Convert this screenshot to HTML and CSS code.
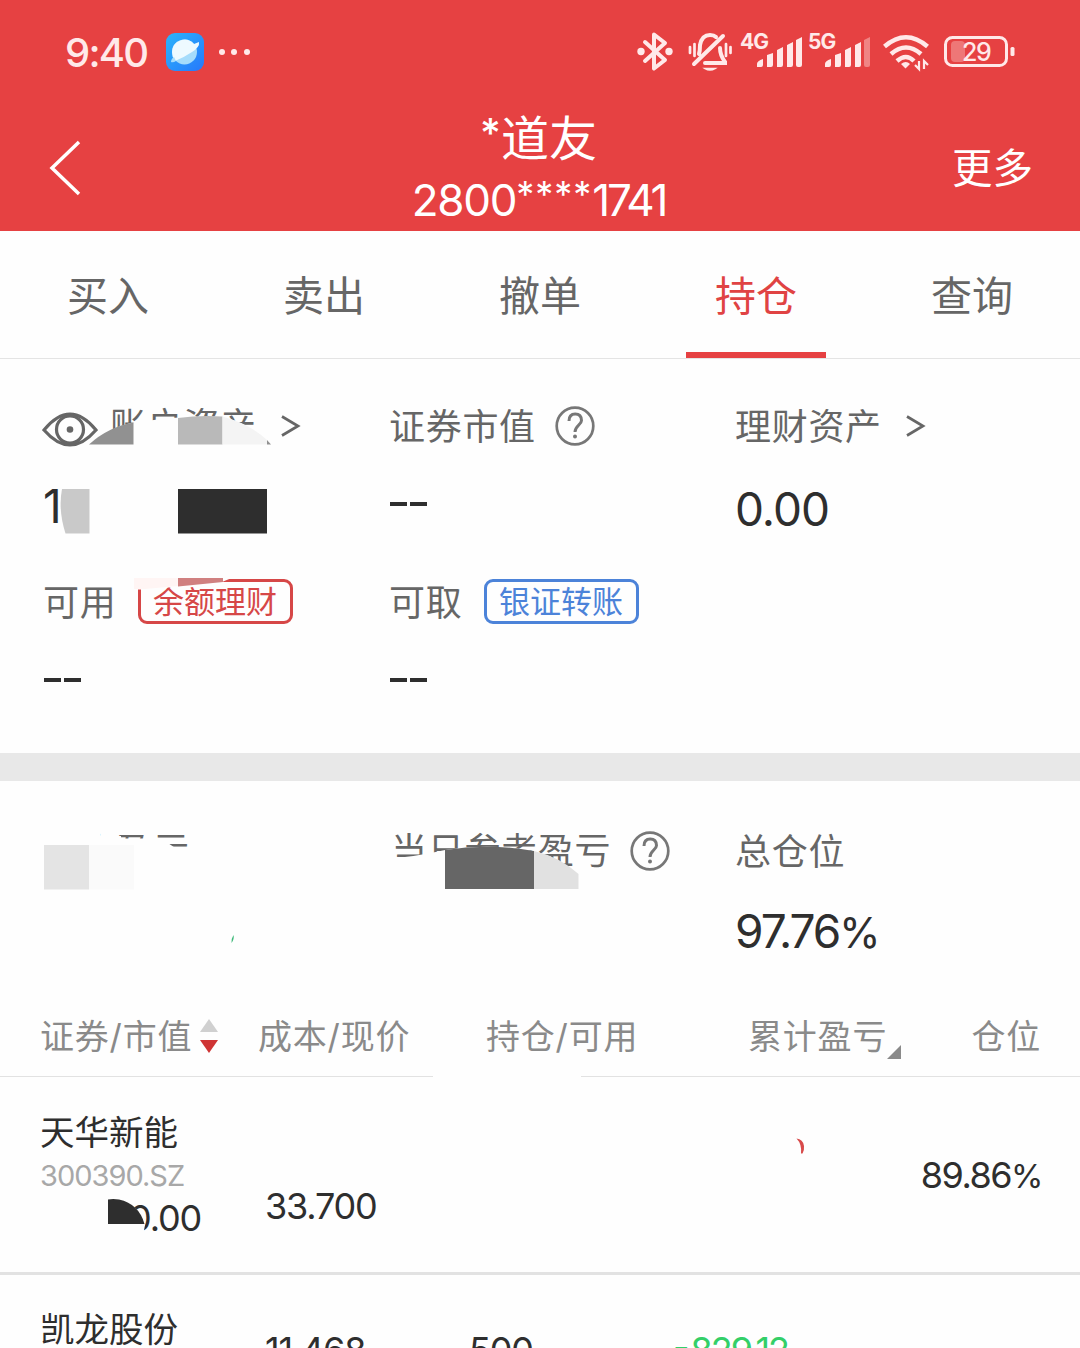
FILE: index.html
```html
<!DOCTYPE html>
<html lang="zh-CN">
<head>
  <meta charset="UTF-8">
  <title>持仓</title>
  <link rel="stylesheet" href="styles.css">
</head>
<body>
  <header class="top">
    <div class="status">
      <span class="time">9:40</span>
      <svg class="planet" width="38" height="38" viewBox="0 0 38 38">
        <defs>
          <linearGradient id="sky" x1="0" y1="0" x2="1" y2="1">
            <stop offset="0" stop-color="#2cb4fb"/>
            <stop offset="1" stop-color="#2678fb"/>
          </linearGradient>
        </defs>
        <rect width="38" height="38" rx="9" fill="url(#sky)"/>
        <circle cx="18.500" cy="19" r="12.500" fill="#a5dcfb"/>
        <path d="M6 19A12.500 12.500 0 0 1 28 11L33 9Q34 14 26 19 17 25 9 28 6 24 6 19z" fill="#eefaff"/>
        <path d="M5 29c0-2 1-4 3-5l2 4q-3 2-5 1z" fill="#a5dcfb"/>
      </svg>
      <svg class="dots" width="34" height="8" viewBox="0 0 34 8" fill="#ffe9e9">
        <circle cx="4" cy="4" r="3"/><circle cx="16" cy="4" r="3"/><circle cx="29" cy="4" r="3"/>
      </svg>
      <svg class="signals" width="380" height="44" viewBox="636 30 380 44" fill="none" stroke="#ffe9e9">
        <g stroke-width="4" stroke-linejoin="round" stroke-linecap="round">
          <path d="M645 42l20 18-11 8.500V34.500l11 8.500-20 18"/>
        </g>
        <g fill="#ffe9e9" stroke="none">
          <circle cx="641" cy="51.500" r="3.700"/><circle cx="669" cy="51.500" r="3.700"/>
        </g>
        <g stroke-width="4" stroke-linecap="round">
          <path d="M699 54q1-3 1-9 2-10 10-10 4 0 6 2M720 48q0 7 5 14v1h-20M694 64l29-28"/>
          <path d="M690 47v6M694.500 44v12M726 44v12M730.500 47v6" stroke-width="2.700"/>
          <path d="M705 68.500q5 3 10 0z" fill="#ffe9e9" stroke-width="1.500"/>
        </g>
        <g fill="#ffe9e9" stroke="none">
          <text class="net" x="740" y="49">4G</text>
          <text class="net" x="808" y="49">5G</text>
          <path d="M757 67v-3q0-3 6-5v6q0 2-2 2zM767 67V55l6-2v12q0 2-2 2zM777 67V50l6-3v18q0 2-2 2zM787 67V45l6-3v23q0 2-2 2zM796 65V40l6-3v28q0 2-2 2h-2q-2 0-2-2z"/>
          <path d="M825 67v-3q0-3 6-5v6q0 2-2 2zM835 67V55l6-2v12q0 2-2 2zM845 67V50l6-3v18q0 2-2 2zM855 67V45l6-3v23q0 2-2 2z"/>
          <path d="M864 65V40l6-3v28q0 2-2 2h-2q-2 0-2-2z" opacity=".4"/>
          <path d="M901 64q5-4 9 0l-4.500 4.500z"/>
        </g>
        <g stroke-width="4.500">
          <path d="M884.500 46.500q21.500-18.500 43 0M891 54q15-13 30 0M897 61q9-8 17 0"/>
          <path d="M919 61v8l-4-4M924 69v-8l4 4" stroke-width="2.200"/>
        </g>
        <rect x="945.500" y="37.500" width="61" height="28" rx="7" stroke-width="3"/>
        <rect x="951" y="41" width="14" height="21" rx="4" fill="#ee7777" stroke="none"/>
        <rect x="1010.500" y="47" width="4" height="9" rx="1.500" fill="#ffe9e9" stroke="none"/>
        <text class="level" x="962" y="61" fill="#ffe9e9" stroke="none">29</text>
      </svg>
    </div>
    <div class="nav">
      <svg class="back" width="34" height="56" viewBox="0 0 34 56">
        <path d="M31 2L4 28l27 26" fill="none" stroke="#fff" stroke-width="3.500"/>
      </svg>
      <div class="account">
        <div class="owner"><span class="star">*</span>道友</div>
        <div class="number">2800<span class="stars">****</span><span class="tail">1741</span></div>
      </div>
      <span class="more">更多</span>
    </div>
  </header>

  <nav class="tabs">
    <span class="tab">买入</span>
    <span class="tab">卖出</span>
    <span class="tab">撤单</span>
    <span class="tab active">持仓</span>
    <span class="tab">查询</span>
  </nav>

  <section class="assets">
    <div class="cell">
      <div class="label">
        <svg class="eye" width="56" height="38" viewBox="0 0 56 38" fill="none" stroke="#666" stroke-width="3.200">
          <path d="M2 20Q28-12 54 20 28 50 2 20z"/>
          <circle cx="28" cy="19.500" r="13.500"/>
          <circle cx="28" cy="19.500" r="3.300" fill="#666" stroke="none"/>
        </svg>
        <span>账户资产</span>
        <svg class="arrow" width="20" height="22" viewBox="0 0 20 22"><path d="M1 1.500l16 9.500-16 9.500" fill="none" stroke="#666" stroke-width="2.700"/></svg>
      </div>
      <div class="value first">1</div>
    </div>
    <div class="cell">
      <div class="label">
        <span>证券市值</span>
        <svg class="help" width="40" height="40" viewBox="0 0 40 40" fill="none" stroke="#777" stroke-width="2.700">
          <circle cx="20" cy="20" r="18.300"/>
          <path d="M14 15q0-7 6.200-7t6.300 6.500c0 4-6.500 5.500-6.500 11.500" stroke-width="3"/>
          <circle cx="20" cy="30.500" r="2" fill="#777" stroke="none"/>
        </svg>
      </div>
      <div class="value dash"><i></i><i></i></div>
    </div>
    <div class="cell">
      <div class="label">
        <span>理财资产</span>
        <svg class="arrow" width="20" height="22" viewBox="0 0 20 22"><path d="M1 1.500l16 9.500-16 9.500" fill="none" stroke="#666" stroke-width="2.700"/></svg>
      </div>
      <div class="value">0.00</div>
    </div>
    <div class="cell">
      <div class="label"><span>可用</span><div class="tag red">余额理财</div></div>
      <div class="value dash"><i></i><i></i></div>
    </div>
    <div class="cell">
      <div class="label"><span>可取</span><div class="tag blue">银证转账</div></div>
      <div class="value dash"><i></i><i></i></div>
    </div>
    <!-- hidden amounts -->
    <svg class="mask" width="346" height="394" viewBox="0 359 346 394">
      <path d="M89 445Q108 428 134 422L150 420.500Q178 416 222 416.500Q252 424 271 445z" fill="#fefefe"/>
      <path d="M89 444.500Q108 427 133.500 422.500V444.500z" fill="#919191"/>
      <path d="M178 444.500V418Q200 415 222.500 416.500V444.500z" fill="#b9b9b9"/>
      <path d="M222.500 444.500V416.500Q250 424 267 440V444.500z" fill="#f4f4f4"/>
      <path d="M267 444.500V440l4 4.500z" fill="#919191"/>
      <path d="M62 489H89.500V533.500H65.500Q58 510 62 489z" fill="#c9c9c9"/>
      <path d="M178 489h89v44.500h-89z" fill="#2e2e2e"/>
      <path d="M133 577H234L222 582Q180 587 145 589.500H133z" fill="#fefefe"/>
      <path d="M134 578H178V586L145 589H134z" fill="#fff5f4"/>
      <path d="M178 578H223V582L178 586.500z" fill="#d08080"/>
    </svg>
  </section>

  <section class="profit">
    <div class="cell">
      <div class="label"><span>持仓盈亏</span></div>
    </div>
    <div class="cell">
      <div class="label today">
        <span>当日参考盈亏</span>
        <svg class="help" width="40" height="40" viewBox="0 0 40 40" fill="none" stroke="#777" stroke-width="2.700">
          <circle cx="20" cy="20" r="18.300"/>
          <path d="M14 15q0-7 6.200-7t6.300 6.500c0 4-6.500 5.500-6.500 11.500" stroke-width="3"/>
          <circle cx="20" cy="30.500" r="2" fill="#777" stroke="none"/>
        </svg>
      </div>
    </div>
    <div class="cell">
      <div class="label"><span>总仓位</span></div>
      <div class="value percent">97.76<small>%</small></div>
    </div>
    <svg class="mask" width="640" height="215" viewBox="0 781 640 215">
      <path d="M40 825H100V836H121V838.500H146L153 841H165L176 848.500H194V880H40z" fill="#fefefe"/>
      <path d="M44 845h45v44.500H44z" fill="#e4e4e4"/>
      <path d="M89 845h45v44.500H89z" fill="#fafafa"/>
      <path d="M231.500 943q-.5-4 2-8 1 4-2 8z" fill="#3cb878"/>
      <path d="M390 858Q415 857 445 850Q490 843 534 851Q560 858 578 875V889H390z" fill="#fefefe"/>
      <path d="M445 889V850Q490 843 534 851V889z" fill="#666"/>
      <path d="M534 889V851Q560 857 578.500 874V889z" fill="#e1e1e1"/>
    </svg>
  </section>

  <section class="holdings">
    <div class="head">
      <span class="sort">证券/市值
        <svg width="20" height="36" viewBox="0 0 20 36"><path d="M10 1l9 13H1z" fill="#d0d0d0"/><path d="M10 35l9-13H1z" fill="#cf3434"/></svg>
      </span>
      <span>成本/现价</span>
      <span>持仓/可用</span>
      <span class="total">累计盈亏<svg width="14" height="14" viewBox="0 0 14 14"><path d="M14 0v14H0z" fill="#8a8a8a"/></svg></span>
      <span class="ratio">仓位</span>
    </div>
    <div class="row">
      <div class="stock">
        <div class="name">天华新能</div>
        <div class="code">300390.SZ</div>
        <div class="worth">0.00</div>
      </div>
      <div class="cost">33.700</div>
      <div class="count"></div>
      <div class="gain"></div>
      <div class="share">89.86<small>%</small></div>
      <svg class="mask" width="1080" height="195" viewBox="0 1077 1080 195">
        <path d="M108 1199.500H119Q139 1204 145 1225L143 1236H108z" fill="#fefefe"/>
        <path d="M108 1224V1199.500Q113 1198.500 119 1199.500Q139 1204 144.500 1224z" fill="#2e2e2e"/>
        <path d="M796.500 1138.500Q803 1139 804 1146 804.500 1150 802.500 1153.500H801Q802 1144 796.500 1138.500z" fill="#d84a4a"/>
      </svg>
    </div>
    <div class="row">
      <div class="stock">
        <div class="name">凯龙股份</div>
      </div>
      <div class="cost">11.468</div>
      <div class="count">500</div>
      <div class="gain"><span class="minus">-</span>829.12</div>
      <div class="share"></div>
    </div>
  </section>
</body>
</html>
```
FILE: styles.css
```css
* {
  box-sizing: border-box;
}

body {
  margin: 0;
  height: 1348px;
  overflow: hidden;
  background: #fefefe;
  font-family: Inter, "Noto Sans CJK SC", sans-serif;
  font-weight: 400;
  color: #2e2e2e;
}

svg {
  display: block;
  flex: none;
}

.top {
  height: 231px;
  background: #e64142;
  color: #fff;
}

.status {
  height: 104px;
  display: flex;
  align-items: center;
  padding: 0 64px 0 65px;
}

.time {
  width: 101px;
  font-size: 40px;
  font-weight: 500;
  letter-spacing: -1.8px;
  color: #ffe9e9;
}

.dots {
  margin-left: 14px;
}

.signals {
  margin-left: auto;
}

.net {
  font-size: 21px;
  font-weight: 700;
  letter-spacing: -1px;
}

.level {
  font-size: 25px;
  font-weight: 500;
  letter-spacing: -1.5px;
}

.nav {
  height: 127px;
  display: flex;
  justify-content: space-between;
  padding: 0 47px 0 48px;
}

.back {
  margin-top: 36px;
}

.account {
  margin-left: 43px;
  text-align: center;
}

.owner {
  height: 66px;
  line-height: 69px;
  font-size: 48px;
}

.star {
  font-size: 40px;
  font-weight: 500;
  line-height: 0;
  vertical-align: 9px;
}

.number {
  height: 60px;
  line-height: 61px;
  font-size: 44px;
  letter-spacing: -1.3px;
  white-space: nowrap;
}

.stars {
  font-size: 36px;
  line-height: 0;
  vertical-align: 9px;
  letter-spacing: 1px;
}

.tail {
  letter-spacing: -3.2px;
}

.more {
  line-height: 129px;
  font-size: 40.500px;
}

.tabs {
  height: 128px;
  display: flex;
  border-bottom: 1px solid #e4e4e4;
}

.tab {
  flex: 1;
  line-height: 130px;
  text-align: center;
  font-size: 41px;
  color: #666;
}

.active {
  color: #e04343;
  background: linear-gradient(#e64142, #e64142) 38px 121px / 140px 6px no-repeat;
}

.assets,
.profit {
  position: relative;
  display: grid;
  grid-template-columns: 346px 346px 1fr;
  padding-left: 43px;
}

.assets {
  height: 394px;
  padding-top: 47px;
  grid-auto-rows: 176px;
}

.profit {
  height: 243px;
  padding-top: 50px;
  border-top: 28px solid #e8e8e8;
}

.label {
  height: 40px;
  display: flex;
  align-items: center;
  font-size: 36px;
  letter-spacing: .7px;
  white-space: nowrap;
  color: #666;
}

.label span {
  padding-bottom: 4px;
}

.cell:first-child .label span,
.today span {
  padding-bottom: 7px;
}

.eye {
  margin: 6px 12px 0 -1px;
}

.arrow {
  margin-left: 24px;
}

.help {
  margin-left: 19px;
}

.today {
  padding-left: 2px;
}

.value {
  height: 60px;
  margin-top: 33px;
  line-height: 60px;
  font-size: 46px;
  letter-spacing: -1px;
}

.first {
  line-height: 54px;
}

.percent {
  margin-top: 30px;
  letter-spacing: -2px;
}

.percent small {
  font-size: 42px;
}

.dash {
  display: flex;
  gap: 3px;
  padding: 23px 0 0 1px;
}

.dash i {
  width: 17px;
  height: 4px;
  background: #2e2e2e;
}

.tag {
  width: 155px;
  height: 45px;
  margin: -2px 0 0 22px;
  padding-right: 2px;
  border: 3px solid;
  border-radius: 9px;
  line-height: 39px;
  text-align: center;
  font-size: 31px;
  letter-spacing: 0;
}

.red {
  color: #d64747;
}

.blue {
  color: #4c83d9;
}

.mask {
  position: absolute;
  top: 0;
  left: 0;
}

.head {
  height: 81px;
  display: grid;
  grid-template-columns: 218px 228px 262px 220px 1fr;
  align-items: center;
  padding: 0 39px 3px 40px;
  border-bottom: 1px solid;
  border-image: linear-gradient(90deg, #e2e2e2 433px, transparent 433px 581px, #e2e2e2 581px) 1;
  font-size: 34px;
  letter-spacing: .8px;
  white-space: nowrap;
  color: #8a8a8a;
}

.sort,
.total {
  display: flex;
  align-items: center;
}

.sort svg {
  margin: 2px 0 0 7px;
}

.total svg {
  margin-top: 34px;
}

.ratio {
  text-align: right;
}

.row {
  position: relative;
  height: 198px;
  display: grid;
  grid-template-columns: 225px 204px 204px 1fr 150px;
  padding: 0 38px 0 40px;
  border-bottom: 3px solid #e2e2e2;
  font-size: 36px;
  letter-spacing: -1.2px;
}

.name {
  margin-top: 31px;
  line-height: 50px;
  font-size: 34.500px;
  letter-spacing: 0;
}

.row:last-child {
  height: 73px;
  border-bottom: 0;
}

.row:last-child .name {
  margin-top: 30px;
  height: 43px;
}

.code {
  line-height: 36px;
  font-size: 29px;
  letter-spacing: -1px;
  color: #a8a8a8;
}

.worth {
  width: 161px;
  line-height: 48px;
  text-align: right;
}

.cost,
.count,
.gain {
  margin-top: 104px;
  line-height: 50px;
}

.row:last-child .cost,
.row:last-child .count,
.row:last-child .gain {
  margin-top: 50px;
  height: 23px;
}

.row .gain {
  color: #33cf68;
  letter-spacing: -2px;
}

.minus {
  margin-right: 3px;
  line-height: 0;
  vertical-align: 3px;
}

.share {
  margin-top: 73px;
  line-height: 50px;
  text-align: right;
  letter-spacing: -1.500px;
}

.share small {
  font-size: 33px;
}
```
